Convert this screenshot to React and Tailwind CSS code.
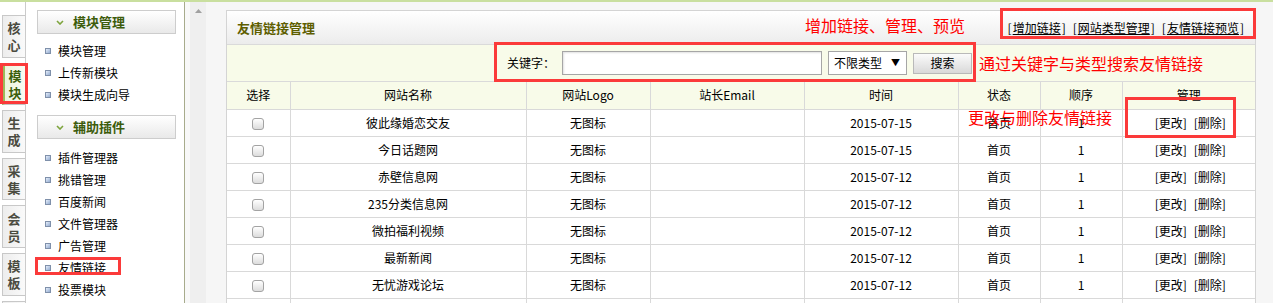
import React from 'react';

// side tabs, menu groups and table rows
const tabs = [
  ['核', '心'],
  ['模', '块'],
  ['生', '成'],
  ['采', '集'],
  ['会', '员'],
  ['模', '板'],
  ['', ''],
];

const groups = [
  { title: '模块管理', items: ['模块管理', '上传新模块', '模块生成向导'] },
  {
    title: '辅助插件',
    items: ['插件管理器', '挑错管理', '百度新闻', '文件管理器', '广告管理', '友情链接', '投票模块'],
  },
];

const rows = [
  ['彼此缘婚恋交友', '2015-07-15'],
  ['今日话题网', '2015-07-15'],
  ['赤壁信息网', '2015-07-12'],
  ['235分类信息网', '2015-07-12'],
  ['微拍福利视频', '2015-07-12'],
  ['最新新闻', '2015-07-12'],
  ['无忧游戏论坛', '2015-07-12'],
  ['', ''],
];

const cols = [
  { label: '选择', w: 'w-[63px]' },
  { label: '网站名称', w: 'w-[236px]' },
  { label: '网站Logo', w: 'w-[124px]' },
  { label: '站长Email', w: 'w-[154px]' },
  { label: '时间', w: 'w-[154px]' },
  { label: '状态', w: 'w-[82px]' },
  { label: '顺序', w: 'w-[82px]' },
  { label: '管理', w: '' },
];

const Chevron = () => (
  <svg width="8" height="5" viewBox="0 0 8 5" className="mr-[9px]">
    <path d="M1 1 L4 4 L7 1" fill="none" stroke="#7da43c" strokeWidth="1.6" />
  </svg>
);

const App = () => {
  return (
    <div
      className="relative w-[1273px] h-[303px] overflow-hidden bg-white text-black text-[12px] leading-[14px]"
      style={{ fontFamily: '"Noto Sans CJK SC", "Noto Sans", sans-serif' }}
    >
      <div className="h-[2px] bg-[#c9df9f]" />
      <div className="flex h-[301px]">
        {/* tab column */}
        <div className="w-[26px] shrink-0 border-r border-[#cbcbcb] pt-[13px] flex flex-col gap-[5px]">
          {tabs.map((t, i) => (
            <div
              key={i}
              className={
                i === 1
                  ? 'ml-[2px] h-[42.6px] shrink-0 border border-r-0 border-[#c4c4c4] border-l-[3px] border-l-[#9cbb5a] bg-gradient-to-r from-[#eef4dc] to-[#f9fbf2] flex flex-col items-center justify-center font-bold text-[13px] leading-[17px] text-[#3b5e0c]'
                  : 'ml-[2px] h-[42.6px] shrink-0 border border-r-0 border-[#c8c8c8] bg-gradient-to-r from-[#ededed] to-[#fafafa] flex flex-col items-center justify-center font-bold text-[13px] leading-[17px] text-[#4b4b40]'
              }
            >
              <span>{t[0]}</span>
              <span>{t[1]}</span>
            </div>
          ))}
        </div>

        {/* menu column */}
        <div className="w-[159px] shrink-0 border-r border-[#a7ab8c] pt-[8px]">
          {groups.map((g, gi) => (
            <div key={g.title} className={gi === 1 ? 'mt-[9px]' : ''}>
              <div className="ml-[11px] w-[139px] h-[24px] border border-[#cdcdcd] bg-gradient-to-b from-white to-[#e9e9e9] flex items-center pl-[18px] font-bold text-[13px] text-[#3d5c0b]">
                <Chevron />
                {g.title}
              </div>
              <div className={gi === 1 ? 'mt-[8px]' : 'mt-[6px]'}>
                {g.items.map((it) => (
                  <div key={it} className="h-[22px] flex items-center pl-[19px] gap-[7px]">
                    <span className="w-[6px] h-[6px] border border-[#7f90aa] bg-gradient-to-br from-[#e6eefa] to-[#94acd0]" />
                    <span>{it}</span>
                  </div>
                ))}
              </div>
            </div>
          ))}
        </div>

        {/* scroll strip */}
        <div className="w-[5px] shrink-0 bg-[#f8f8f8]" />
        <div className="w-[16px] shrink-0 bg-[#efefef] flex justify-center pt-[7px]">
          <svg width="7" height="4" viewBox="0 0 7 4">
            <path d="M0 4 L3.5 0 L7 4 Z" fill="#a0a0a0" />
          </svg>
        </div>

        {/* main area */}
        <div className="flex-1 bg-[#f6f6f6] pl-[20px] pr-[17px] pt-[8px]">
          <div className="bg-white border border-[#d4d4d4]">
            <div className="h-[34px] border-b border-[#dadada] bg-gradient-to-b from-white to-[#ececec] flex items-center justify-between pl-[10px] pr-[11px]">
              <span className="font-bold text-[13px] text-[#5e5e00]">友情链接管理</span>
              <span className="flex gap-[7px] text-[12px]">
                <span>[<span className="underline mx-[1px]">增加链接</span>]</span>
                <span>[<span className="underline mx-[1px]">网站类型管理</span>]</span>
                <span>[<span className="underline mx-[1px]">友情链接预览</span>]</span>
              </span>
            </div>

            <div className="h-[37px] bg-[#f8fbe9] flex items-center pl-[280px] border-b border-[#dadada]">
              <span>关键字：</span>
              <div className="ml-[7px] w-[260px] h-[24px] border border-[#a6a6a6] bg-white shadow-[inset_1px_1px_2px_rgba(0,0,0,0.12)]" />
              <div className="ml-[6px] w-[79px] h-[24px] border border-[#a6a6a6] bg-white flex items-center justify-between pl-[5px] pr-[6px]">
                <span>不限类型</span>
                <span className="text-[9px]">▼</span>
              </div>
              <div className="ml-[6px] w-[59px] h-[21px] border border-[#b9b9b9] bg-gradient-to-b from-[#fbfbfb] to-[#d9d9d9] flex items-center justify-center">
                搜索
              </div>
            </div>

            <table className="w-full table-fixed border-collapse">
              <thead>
                <tr className="h-[27px] bg-[#f8fbe9]">
                  {cols.map((c, i) => (
                    <th
                      key={c.label}
                      className={`${c.w} font-normal border-b border-[#d9d9d9] ${i < cols.length - 1 ? 'border-r' : ''}`}
                    >
                      {c.label}
                    </th>
                  ))}
                </tr>
              </thead>
              <tbody>
                {rows.map((r, i) => (
                  <tr key={i} className="h-[27px] text-center">
                    <td className="border-r border-b border-[#d9d9d9]">
                      <span className="inline-block align-middle w-[12px] h-[12px] rounded-[3px] border border-[#a3a3a3] bg-gradient-to-b from-white to-[#dcdcdc]" />
                    </td>
                    <td className="border-r border-b border-[#d9d9d9]">{r[0]}</td>
                    <td className="border-r border-b border-[#d9d9d9]">{r[0] && '无图标'}</td>
                    <td className="border-r border-b border-[#d9d9d9]" />
                    <td className="border-r border-b border-[#d9d9d9]">{r[1]}</td>
                    <td className="border-r border-b border-[#d9d9d9]">{r[0] && '首页'}</td>
                    <td className="border-r border-b border-[#d9d9d9]">{r[0] && '1'}</td>
                    <td className="border-b border-[#d9d9d9]">
                      {r[0] && (
                        <span className="inline-flex gap-[7px] ml-[3px]">
                          <span>[更改]</span>
                          <span>[删除]</span>
                        </span>
                      )}
                    </td>
                  </tr>
                ))}
              </tbody>
            </table>
          </div>
        </div>
      </div>

      {/* red annotations laid over the screen */}
      <div className="absolute left-0 top-[63px] w-[28px] h-[41px] border-[3px] border-[#fb3a3a]" />
      <div className="absolute left-[35px] top-[257px] w-[86px] h-[18px] border-[3px] border-[#fb3a3a]" />
      <div className="absolute left-[1000px] top-[8px] w-[256px] h-[31px] border-[3px] border-[#fb3a3a]" />
      <div className="absolute left-[494px] top-[42px] w-[482px] h-[40px] border-[3px] border-[#fb3a3a]" />
      <div className="absolute left-[1125px] top-[97px] w-[111px] h-[41px] border-[3px] border-[#fb3a3a]" />

      <div className="absolute left-[805px] top-[17px] text-[16px] leading-[16px] text-[#ff0000]">增加链接、管理、预览</div>
      <div className="absolute left-[979px] top-[55px] text-[16px] leading-[16px] text-[#ff0000]">通过关键字与类型搜索友情链接</div>
      <div className="absolute left-[968px] top-[109px] text-[16px] leading-[16px] text-[#ff0000]">更改与删除友情链接</div>
    </div>
  );
};

export default App;
